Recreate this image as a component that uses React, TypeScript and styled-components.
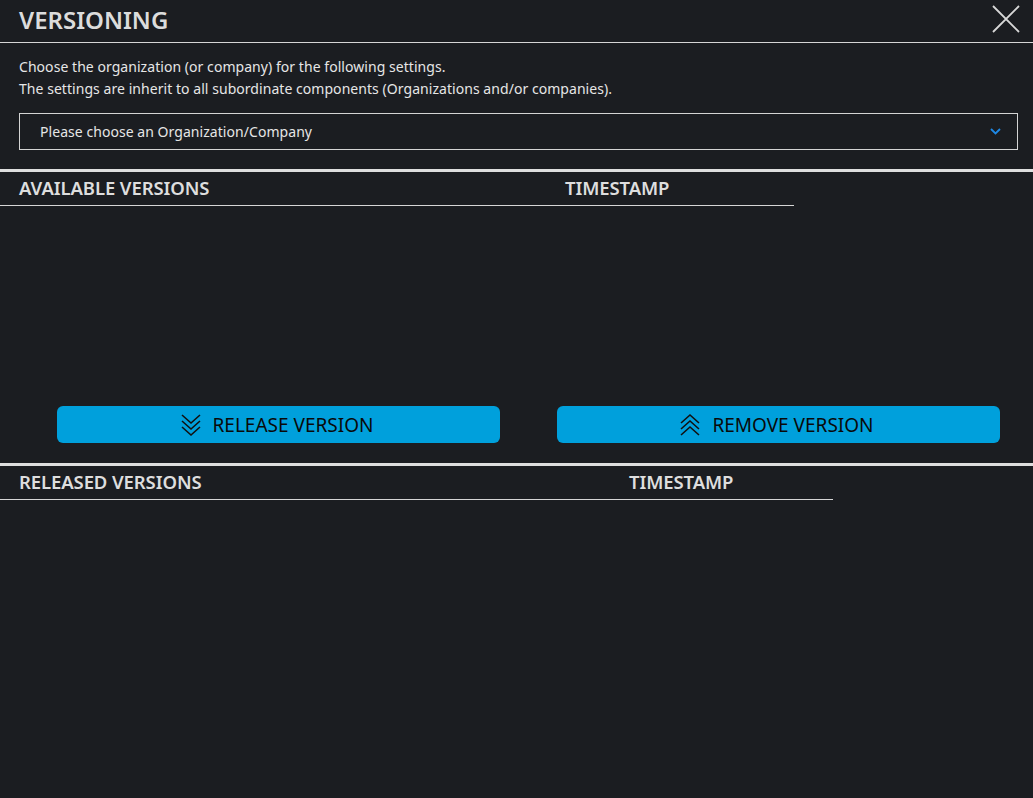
import { createGlobalStyle, styled } from "styled-components";

const GlobalStyle = createGlobalStyle`
  html, body {
    margin: 0;
    padding: 0;
    background: #1b1d21;
  }
  body {
    font-family: "Noto Sans", "Open Sans", sans-serif;
    color: #e2e2e2;
  }
`;

const Page = styled.div`
  width: 1033px;
  height: 798px;
  background: #1b1d21;
  overflow: hidden;
`;

const Header = styled.header`
  height: 42px;
  border-bottom: 1px solid #d6d6d6;
  display: flex;
  align-items: center;
  justify-content: space-between;
  padding: 0 12px 0 19px;
`;

const Title = styled.h1`
  margin: 0;
  font-size: 24px;
  font-weight: 600;
  color: #dcdcdc;
  padding-bottom: 3px;
`;

const CloseButton = styled.button`
  background: none;
  border: 0;
  padding: 0;
  width: 30px;
  height: 30px;
  display: flex;
  align-items: center;
  justify-content: center;
  cursor: pointer;
  margin-bottom: 4px;
`;

const Intro = styled.div`
  padding: 13px 19px 0;
  font-size: 14px;
  line-height: 22px;
  color: #e6e6e6;
  letter-spacing: 0.05px;
`;

const Select = styled.div`
  margin: 13px 15px 0 19px;
  height: 35px;
  border: 1px solid #d4d4d4;
  display: flex;
  align-items: center;
  justify-content: space-between;
  padding: 0 16px 0 20px;
  font-size: 14px;
  color: #e6e6e6;
  letter-spacing: 0.05px;
`;

const Section = styled.section<{ $height?: number }>`
  margin-top: ${(p) => (p.$height ? 19 : 0)}px;
  border-top: 3px solid #dedede;
  height: ${(p) => (p.$height ? `${p.$height}px` : "auto")};
  display: flex;
  flex-direction: column;
`;

const TableHead = styled.div<{ $width: number; $col: number; $h: number }>`
  flex-shrink: 0;
  width: ${(p) => p.$width}px;
  height: ${(p) => p.$h}px;
  border-bottom: 1px solid #d6d6d6;
  display: grid;
  grid-template-columns: ${(p) => p.$col}px 1fr;
  align-items: center;
  box-sizing: border-box;
  padding-left: 19px;
`;

const HeadCell = styled.div`
  font-size: 18.5px;
  font-weight: 600;
  color: #dedede;
  letter-spacing: -0.1px;
  padding-bottom: 2px;
`;

const Body = styled.div`
  flex: 1;
`;

const Actions = styled.div`
  display: grid;
  grid-template-columns: 443px 443px;
  column-gap: 57px;
  padding: 0 0 20px 57px;
`;

const ActionButton = styled.button`
  height: 37px;
  border: 0;
  border-radius: 6px;
  background: #00a0dc;
  color: #0a0a0a;
  font-family: "Noto Sans", "Open Sans", sans-serif;
  font-size: 19px;
  display: flex;
  align-items: center;
  justify-content: center;
  gap: 11px;
  cursor: pointer;
  padding: 0 4px 0 0;
`;

const DoubleChevron = ({ up }: { up?: boolean }) => (
  <svg width="22" height="26" viewBox="0 0 22 26" fill="none" stroke="#111" strokeWidth="1.6">
    <g transform={up ? "rotate(180 11 13)" : undefined}>
      <path d="M2 3 L11 11 L20 3" />
      <path d="M2 9 L11 17 L20 9" />
      <path d="M2 15 L11 23 L20 15" />
    </g>
  </svg>
);

export default function App() {
  return (
    <Page>
      <GlobalStyle />
      <Header>
        <Title>VERSIONING</Title>
        <CloseButton aria-label="close">
          <svg width="28" height="28" viewBox="0 0 28 28" stroke="#d8d8d8" strokeWidth="1.8">
            <path d="M1 1 L27 27 M27 1 L1 27" />
          </svg>
        </CloseButton>
      </Header>
      <Intro>
        <div>Choose the organization (or company) for the following settings.</div>
        <div>The settings are inherit to all subordinate components (Organizations and/or companies).</div>
      </Intro>
      <Select>
        <span>Please choose an Organization/Company</span>
        <svg width="11" height="7" viewBox="0 0 11 7" fill="none" stroke="#1e88e5" strokeWidth="1.8">
          <path d="M1 1 L5.5 5.5 L10 1" />
        </svg>
      </Select>
      <Section $height={291}>
        <TableHead $width={794} $col={546} $h={34}>
          <HeadCell>AVAILABLE VERSIONS</HeadCell>
          <HeadCell>TIMESTAMP</HeadCell>
        </TableHead>
        <Body />
        <Actions>
          <ActionButton>
            <DoubleChevron />
            RELEASE VERSION
          </ActionButton>
          <ActionButton>
            <DoubleChevron up />
            REMOVE VERSION
          </ActionButton>
        </Actions>
      </Section>
      <Section>
        <TableHead $width={833} $col={610} $h={34}>
          <HeadCell>RELEASED VERSIONS</HeadCell>
          <HeadCell>TIMESTAMP</HeadCell>
        </TableHead>
      </Section>
    </Page>
  );
}
